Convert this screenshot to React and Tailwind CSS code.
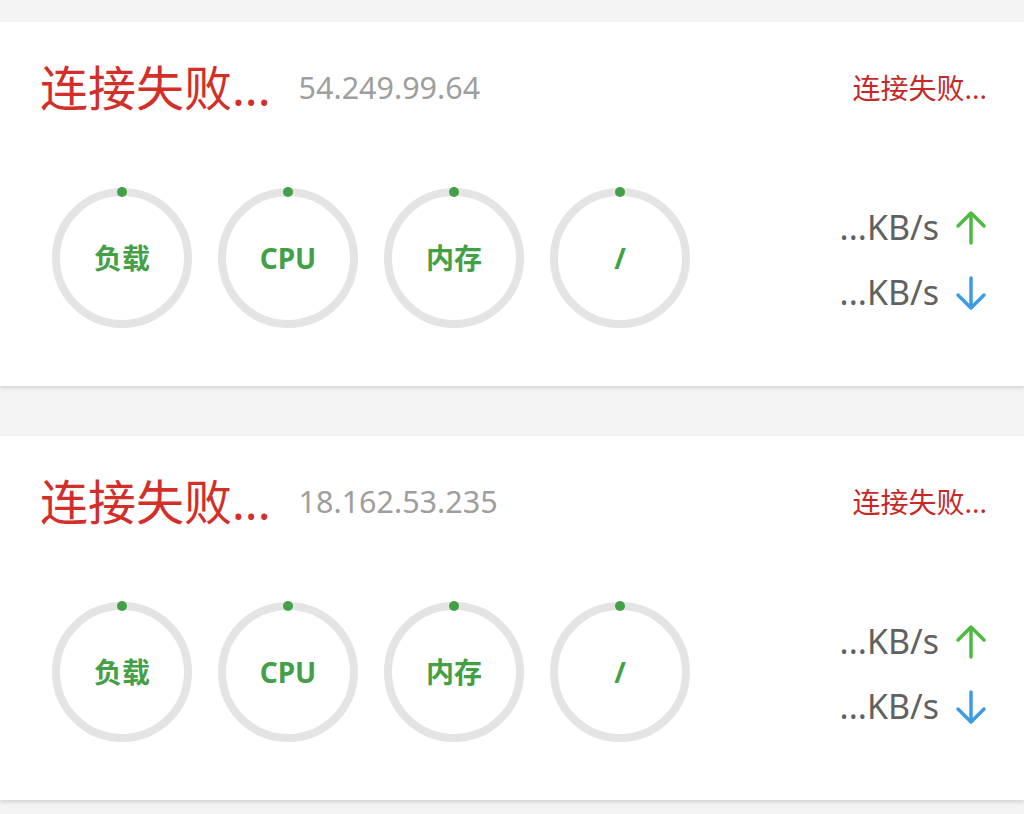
import React from 'react';

const servers = [
  { ip: '54.249.99.64' },
  { ip: '18.162.53.235' },
];

const gauges = ['负载', 'CPU', '内存', '/'];

function Gauge({ label }) {
  return (
    <div className="relative w-[140px] h-[140px] flex items-center justify-center">
      <svg width="140" height="140" viewBox="0 0 140 140" className="absolute inset-0 overflow-visible">
        <circle cx="70" cy="70" r="66" fill="none" stroke="#e4e4e4" strokeWidth="8" />
        <circle cx="70" cy="4" r="5" fill="#43a047" />
      </svg>
      <span className="relative text-[28px] font-bold text-[#43a047]">{label}</span>
    </div>
  );
}

function ArrowUp() {
  return (
    <svg width="32" height="36" viewBox="0 0 32 36" fill="none" stroke="#4cbb3f" strokeWidth="3.5" strokeLinecap="round" strokeLinejoin="round">
      <path d="M16 33V4" />
      <path d="M3 16L16 3l13 13" />
    </svg>
  );
}

function ArrowDown() {
  return (
    <svg width="32" height="36" viewBox="0 0 32 36" fill="none" stroke="#3d9be3" strokeWidth="3.5" strokeLinecap="round" strokeLinejoin="round">
      <path d="M16 3v29" />
      <path d="M3 20l13 13 13-13" />
    </svg>
  );
}

function ServerCard({ ip }) {
  return (
    <div className="bg-white shadow-[0_2px_4px_rgba(0,0,0,0.14)] pl-[40px] pr-[37px] pt-[36px] pb-[58px]">
      <div className="flex items-center h-[60px]">
        <span className="text-[48px] leading-[60px] text-[#d32f2a]">连接失败...</span>
        <span className="ml-[28px] text-[30.5px] text-[#9e9e9e]">{ip}</span>
        <span className="ml-auto text-[28px] text-[#c62828]">连接失败...</span>
      </div>
      <div className="flex items-center mt-[70px]">
        <div className="flex gap-[26px] ml-[12px]">
          {gauges.map((g) => (
            <Gauge key={g} label={g} />
          ))}
        </div>
        <div className="ml-auto flex flex-col gap-[25px] pt-[4px]">
          <div className="flex items-center justify-end h-[40px]">
            <span className="text-[34px] text-[#616161]">...KB/s</span>
            <span className="ml-[16px]"><ArrowUp /></span>
          </div>
          <div className="flex items-center justify-end h-[40px]">
            <span className="text-[34px] text-[#616161]">...KB/s</span>
            <span className="ml-[16px]"><ArrowDown /></span>
          </div>
        </div>
      </div>
    </div>
  );
}

export default function App() {
  return (
    <div
      className="min-h-[814px] bg-[#f4f4f4] pt-[22px] flex flex-col gap-[50px]"
      style={{ fontFamily: '"Noto Sans", "Noto Sans CJK SC", sans-serif' }}
    >
      {servers.map((s) => (
        <ServerCard key={s.ip} ip={s.ip} />
      ))}
    </div>
  );
}
